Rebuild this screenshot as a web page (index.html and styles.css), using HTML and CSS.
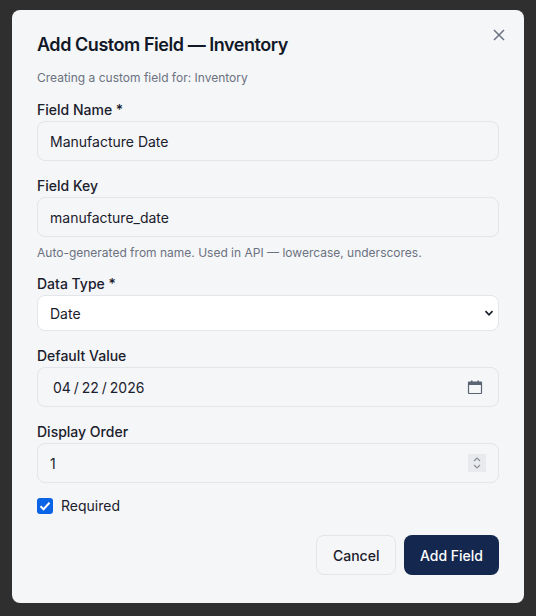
FILE: index.html
```html
<!DOCTYPE html>
<html lang="en">
<head>
<meta charset="utf-8">
<title>Add Custom Field</title>
<link rel="stylesheet" href="styles.css">
</head>
<body>
<div class="modal">
  <button class="close" type="button" aria-label="Close">
    <svg width="16" height="16" viewBox="0 0 16 16"><path d="M3 3l10 10M13 3L3 13" fill="none" stroke="currentColor" stroke-width="1.5"/></svg>
  </button>
  <h2 class="title">Add Custom Field — Inventory</h2>
  <p class="sub">Creating a custom field for: Inventory</p>
  <div class="field first">
    <label class="label">Field Name *</label>
    <div class="input">Manufacture Date</div>
  </div>
  <div class="field">
    <label class="label">Field Key</label>
    <div class="input">manufacture_date</div>
    <p class="hint">Auto-generated from name. Used in API — lowercase, underscores.</p>
  </div>
  <div class="field after-hint">
    <label class="label">Data Type *</label>
    <div class="input select">
      <span>Date</span>
      <svg class="chev" width="10" height="10" viewBox="0 0 10 10"><path d="M1.5 3.2L5 6.8l3.5-3.6" fill="none" stroke="#1a202c" stroke-width="1.7"/></svg>
    </div>
  </div>
  <div class="field">
    <label class="label">Default Value</label>
    <div class="input date">
      <span class="dateval">04 / 22 / 2026</span>
      <svg class="cal" width="16" height="16" viewBox="0 0 16 16"><path d="M2 3h12a.5.5 0 0 1 .5.5v10.500a.5.5 0 0 1-.5.5H2a.5.5 0 0 1-.5-.5V3.500A.5.5 0 0 1 2 3z" fill="none" stroke="#5b6472" stroke-width="1.2"/><path d="M1.500 3h13v3h-13zM4 1.500h1.500V3H4zM10.500 1.500H12V3h-1.500z" fill="#5b6472"/></svg>
    </div>
  </div>
  <div class="field">
    <label class="label">Display Order</label>
    <div class="input number">
      <span>1</span>
      <span class="spin"><svg width="10" height="16" viewBox="0 0 10 16"><path d="M2 6l3-3 3 3M2 10l3 3 3-3" fill="none" stroke="#8a8f98" stroke-width="1.2"/></svg></span>
    </div>
  </div>
  <div class="check">
    <span class="box"><svg width="16" height="16" viewBox="0 0 16 16"><path d="M3.500 8.200l3 3 6-6.400" fill="none" stroke="#fff" stroke-width="2"/></svg></span>
    <span>Required</span>
  </div>
  <div class="actions">
    <button class="btn cancel" type="button">Cancel</button>
    <button class="btn primary" type="button">Add Field</button>
  </div>
</div>
</body>
</html>
```
FILE: styles.css
```css
* { box-sizing: border-box; }
html, body { margin: 0; height: 100%; }
body {
  background: #2f2f2f;
  font-family: Inter, "Liberation Sans", sans-serif;
  color: #1a202c;
  padding: 10px 12px 12px;
  overflow: hidden;
}
.modal {
  position: relative;
  background: #f5f6f8;
  border-radius: 8px;
  height: 593px;
  padding: 24px 25px;
}
.close {
  position: absolute;
  top: 17px;
  right: 17px;
  width: 16px;
  height: 16px;
  padding: 0;
  border: 0;
  background: none;
  color: #6b7280;
  display: flex;
}
.title { margin: 0; font-size: 18px; line-height: 22px; font-weight: 600; color: #111827; letter-spacing: -0.45px; }
.sub { margin: 14px 0 0; font-size: 12px; line-height: 16px; color: #6b7280; }
.field { margin-top: 16px; }
.first { margin-top: 15px; }
.after-hint { margin-top: 14px; }
.label { display: block; font-size: 14px; line-height: 17px; font-weight: 500; color: #1a202c; margin-bottom: 3px; }
.input {
  height: 40px;
  border: 1px solid #e2e5ea;
  border-radius: 8px;
  background: #f5f6f8;
  padding: 0 12px;
  font-size: 14px;
  display: flex;
  align-items: center;
  justify-content: space-between;
  color: #1a202c;
}
.select { height: 36px; background: #fff; }
.chev { margin-right: -8px; }
.cal { margin-right: 3px; }
.dateval { margin-left: 3px; word-spacing: -1px; }
.hint { margin: 8px 0 0; font-size: 12px; line-height: 16px; color: #6b7280; }
.spin { width: 18px; height: 18px; background: #e9eaed; display: flex; align-items: center; justify-content: center; }
.check { display: flex; align-items: center; gap: 8px; margin-top: 14px; font-size: 14px; }
.box { width: 16px; height: 16px; border-radius: 3px; background: #0b63e5; display: flex; }
.actions { display: flex; justify-content: flex-end; gap: 8px; margin-top: 21px; }
.btn { height: 40px; border-radius: 8px; font: 500 14px Inter, sans-serif; padding: 0 16px; }
.cancel { background: #f5f6f8; border: 1px solid #e2e5ea; color: #1a202c; padding: 0 15.5px; }
.primary { background: #14284f; border: 0; color: #fff; }
```
